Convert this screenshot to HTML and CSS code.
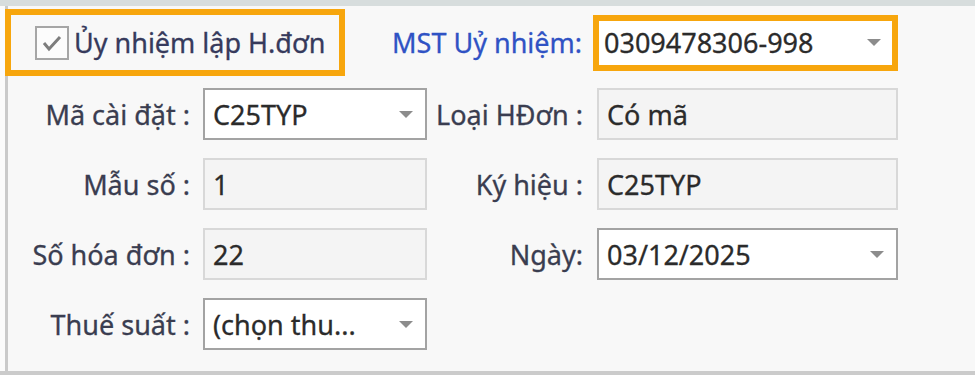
FILE: index.html
```html
<!DOCTYPE html>
<html lang="vi">
<head>
	<meta charset="UTF-8">
	<title>Ủy nhiệm lập hóa đơn</title>
	<link rel="stylesheet" href="styles.css">
</head>
<body>
	<div class="window">
		<div class="panel">
			<div class="row-top">
				<label class="mark check-wrap">
					<span class="check">
						<svg width="30" height="30" viewBox="0 0 30 30"><polyline points="7,15 12,21 23,9" fill="none" stroke="#7d7d7d" stroke-width="3"/></svg>
					</span>
					<span class="check-text">Ủy nhiệm lập H.đơn</span>
				</label>
				<span class="label label-blue">MST Uỷ nhiệm:</span>
				<div class="mark mark-combo">
					<span class="value">0309478306-998</span>
					<span class="arrow"></span>
				</div>
			</div>

			<div class="row">
				<span class="label">Mã cài đặt :</span>
				<div class="combo"><span class="value">C25TYP</span><span class="arrow"></span></div>
				<span class="label">Loại HĐơn :</span>
				<div class="text-box"><span class="value">Có mã</span></div>
			</div>

			<div class="row">
				<span class="label">Mẫu số :</span>
				<div class="text-box"><span class="value">1</span></div>
				<span class="label">Ký hiệu :</span>
				<div class="text-box"><span class="value">C25TYP</span></div>
			</div>

			<div class="row">
				<span class="label">Số hóa đơn :</span>
				<div class="text-box"><span class="value">22</span></div>
				<span class="label">Ngày:</span>
				<div class="combo"><span class="value">03/12/2025</span><span class="arrow"></span></div>
			</div>

			<div class="row">
				<span class="label">Thuế suất :</span>
				<div class="combo"><span class="value">(chọn thu...</span><span class="arrow"></span></div>
			</div>
		</div>
	</div>
</body>
</html>
```

FILE: styles.css
```css
*{margin: 0;padding: 0;box-sizing: border-box;}
body{
	background: #fff;
	font: 27px 'Noto Sans', 'Liberation Sans', sans-serif;
	color: #2b2b2b;
	-webkit-text-stroke: 0.3px;
}
.window{
	height: 375px;
	background: #fbfbfb;
	border-top: 6px solid #d7dddd;
	border-bottom: 4px solid #cbcbcb;
}
.panel{
	height: 100%;
	margin-left: 5px;
	padding-top: 3px;
	background: #f8f8f8;
	border-left: 3px solid #cacaca;
}
.row-top{
	display: flex;
	align-items: center;
	width: 890px;
	height: 67px;
}
.row{
	display: grid;
	grid-template-columns: 195px 224px 170px 301px;
	align-items: center;
	height: 52px;
	margin-top: 18px;
}
.row-top + .row{
	margin-top: 12px;
}
.label{
	padding-right: 13px;
	text-align: right;
	color: #3a3d50;
	white-space: nowrap;
}
.row .label:nth-child(3){
	padding-right: 14px;
}
.label-blue{
	flex: 1;
	padding-right: 11px;
	color: #2f52c4;
}
.mark{
	border: 6px solid #f7a60d;
}
.check-wrap{
	display: flex;
	align-items: center;
	width: 340px;
	height: 67px;
	margin-left: -3px;
	padding-left: 24px;
}
.check{
	display: flex;
	align-items: center;
	justify-content: center;
	width: 34px;
	height: 34px;
	background: #fcfcfc;
	border: 2px solid #a6a6a6;
}
.check-text{
	margin-left: 5px;
	color: #363a5c;
}
.mark-combo{
	display: flex;
	align-items: center;
	justify-content: space-between;
	width: 305px;
	height: 56px;
	padding: 0 11px 0 5px;
	background: #fff;
}
.combo, .text-box{
	display: flex;
	align-items: center;
	justify-content: space-between;
	height: 52px;
	padding: 0 12px 0 8px;
}
.combo{
	background: #fff;
	border: 2px solid #a3a3a3;
}
.text-box{
	background: #f4f4f4;
	border: 2px solid #d8d8d8;
}
.value{
	white-space: nowrap;
}
.arrow{
	width: 0;
	height: 0;
	border: 7px solid transparent;
	border-top-color: #8c8c8c;
	border-bottom-width: 0;
}
```
